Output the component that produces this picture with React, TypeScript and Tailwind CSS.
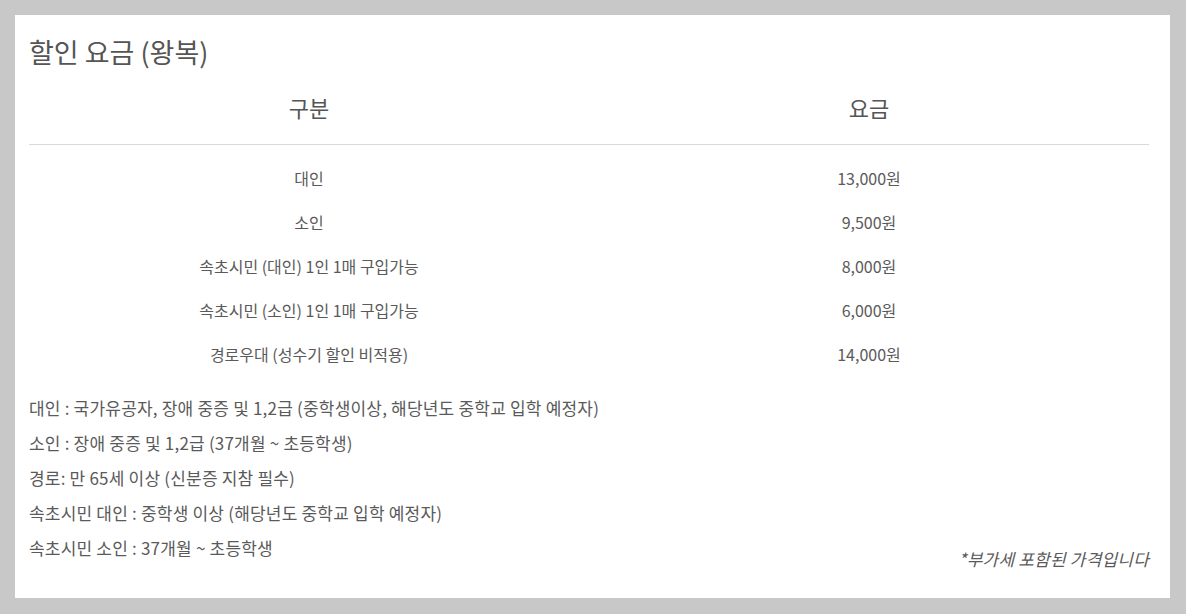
const rows: [string, string][] = [
  ["대인", "13,000원"],
  ["소인", "9,500원"],
  ["속초시민 (대인) 1인 1매 구입가능", "8,000원"],
  ["속초시민 (소인) 1인 1매 구입가능", "6,000원"],
  ["경로우대 (성수기 할인 비적용)", "14,000원"],
];

const notes = [
  "대인 : 국가유공자, 장애 중증 및 1,2급 (중학생이상, 해당년도 중학교 입학 예정자)",
  "소인 : 장애 중증 및 1,2급 (37개월 ~ 초등학생)",
  "경로: 만 65세 이상 (신분증 지참 필수)",
  "속초시민 대인 : 중학생 이상 (해당년도 중학교 입학 예정자)",
];

export default function App() {
  return (
    <div
      className="min-h-screen bg-[#c8c8c8] pt-[15px] pl-[15px] pr-[16px] text-[#555]"
      style={{ fontFamily: '"Noto Sans CJK KR", "Noto Sans", sans-serif' }}
    >
      <div className="h-[583px] bg-white pl-[14px] pr-[21px] pt-[18px]">
        <h2 className="text-[27px] leading-[38px] font-normal text-[#555]">할인 요금 (왕복)</h2>

        {/* price table */}
        <div className="grid grid-cols-2 border-b border-[#d9d9d9] text-[22px] text-[#555]">
          <div className="flex h-[73px] items-center justify-center">구분</div>
          <div className="flex h-[73px] items-center justify-center">요금</div>
        </div>
        <div className="pt-[11px] text-[16px] text-[#5a5a5a]">
          {rows.map(([name, price]) => (
            <div key={name} className="grid h-[44px] grid-cols-2 items-center">
              <div className="text-center">{name}</div>
              <div className="text-center">{price}</div>
            </div>
          ))}
        </div>

        {/* notes */}
        <div className="mt-[14px] text-[17px] leading-[35px] text-[#5a5a5a] tracking-[0.2px]">
          {notes.map((n) => (
            <p key={n}>{n}</p>
          ))}
          <div className="flex items-start justify-between">
            <p>속초시민 소인 : 37개월 ~ 초등학생</p>
            <p className="pt-[11px] italic">*부가세 포함된 가격입니다</p>
          </div>
        </div>
      </div>
    </div>
  );
}
